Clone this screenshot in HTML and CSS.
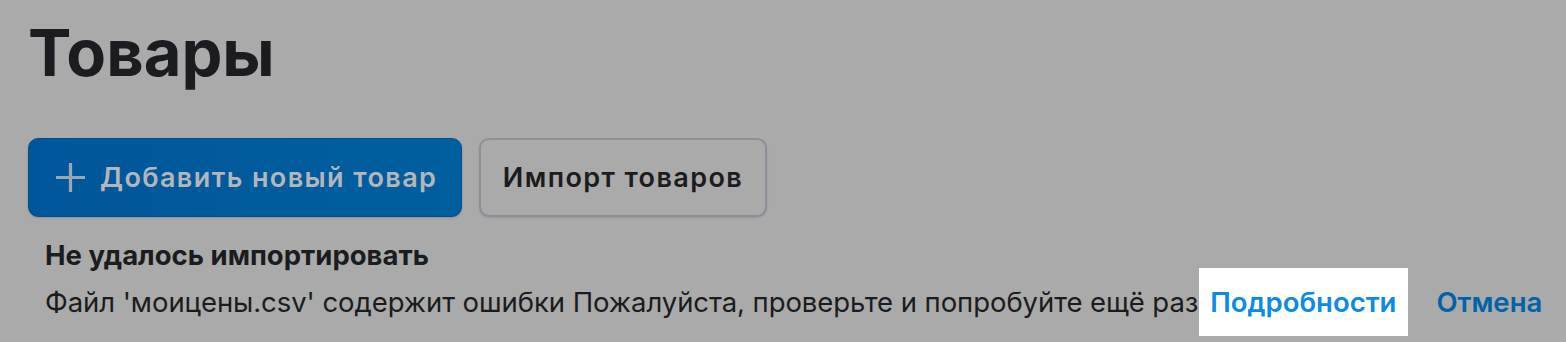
FILE: index.html
```html
<!DOCTYPE html>
<html lang="ru">
<head>
<meta charset="utf-8">
<link rel="stylesheet" href="styles.css">
</head>
<body>
<div class="page">
  <h1 class="title">Товары</h1>
  <div class="actions">
    <button class="btn btn-primary">
      <svg class="plus" width="31" height="31" viewBox="0 0 31 31"><path d="M15.5 1V30M1 15.5H30" stroke="currentColor" stroke-width="3.2" fill="none"/></svg>
      <span>Добавить новый товар</span>
    </button>
    <button class="btn btn-secondary">Импорт товаров</button>
  </div>
  <div class="notice">
    <div class="notice-title">Не удалось импортировать</div>
    <div class="notice-row">
      <span class="notice-text">Файл 'моицены.csv' содержит ошибки Пожалуйста, проверьте и попробуйте ещё раз</span>
      <a class="link link-details">Подробности</a>
      <a class="link link-cancel">Отмена</a>
    </div>
  </div>
</div>
</body>
</html>
```
FILE: styles.css
```css
html, body {
  margin: 0;
  padding: 0;
  background: #aaaaaa;
}
body {
  font-family: Inter, "Noto Sans", sans-serif;
  color: #1b1c20;
}
.page {
  padding: 14px 0 0 28px;
}
.title {
  margin: 0;
  font-family: Inter, "Noto Sans", sans-serif;
  font-weight: 700;
  font-size: 65px;
  line-height: 78px;
  letter-spacing: 0;
  color: #1b1c20;
}
.actions {
  display: flex;
  gap: 17px;
  margin-top: 46px;
}
.btn {
  box-sizing: border-box;
  height: 79px;
  border-radius: 10px;
  font-family: Inter, "Noto Sans", sans-serif;
  font-weight: 600;
  font-size: 27px;
  letter-spacing: 1.4px;
  display: flex;
  align-items: center;
  cursor: pointer;
}
.btn-primary {
  width: 434px;
  border: 1px solid #00508a;
  background: linear-gradient(90deg, #00569a 0%, #005f9f 100%);
  color: #b4b6ba;
  gap: 14px;
  padding: 0 0 0 26px;
  box-shadow: 0 1px 2px rgba(0,0,0,0.15);
}
.plus {
  color: #9ba6b3;
  flex: none;
}
.btn-secondary {
  width: 288px;
  justify-content: center;
  border: 2px solid #8b8f98;
  background: #aaaaaa;
  color: #1b1c20;
  box-shadow: 0 1px 2px rgba(0,0,0,0.12);
}
.notice {
  margin: 20px 0 0 17px;
}
.notice-title {
  font-weight: 700;
  font-size: 27.5px;
  line-height: 36px;
}
.notice-row {
  display: flex;
  align-items: center;
  font-size: 27.5px;
  margin-top: -5px;
}
.notice-text {
  letter-spacing: -0.07px;
  white-space: nowrap;
}
.link {
  font-weight: 600;
  font-size: 27.5px;
  white-space: nowrap;
}
.link-details {
  background: #ffffff;
  color: #0a8be6;
  padding: 17px 12px 17px 11px;
  margin-left: 1px;
}
.link-cancel {
  color: #0062a8;
  margin-left: 28px;
}
```
